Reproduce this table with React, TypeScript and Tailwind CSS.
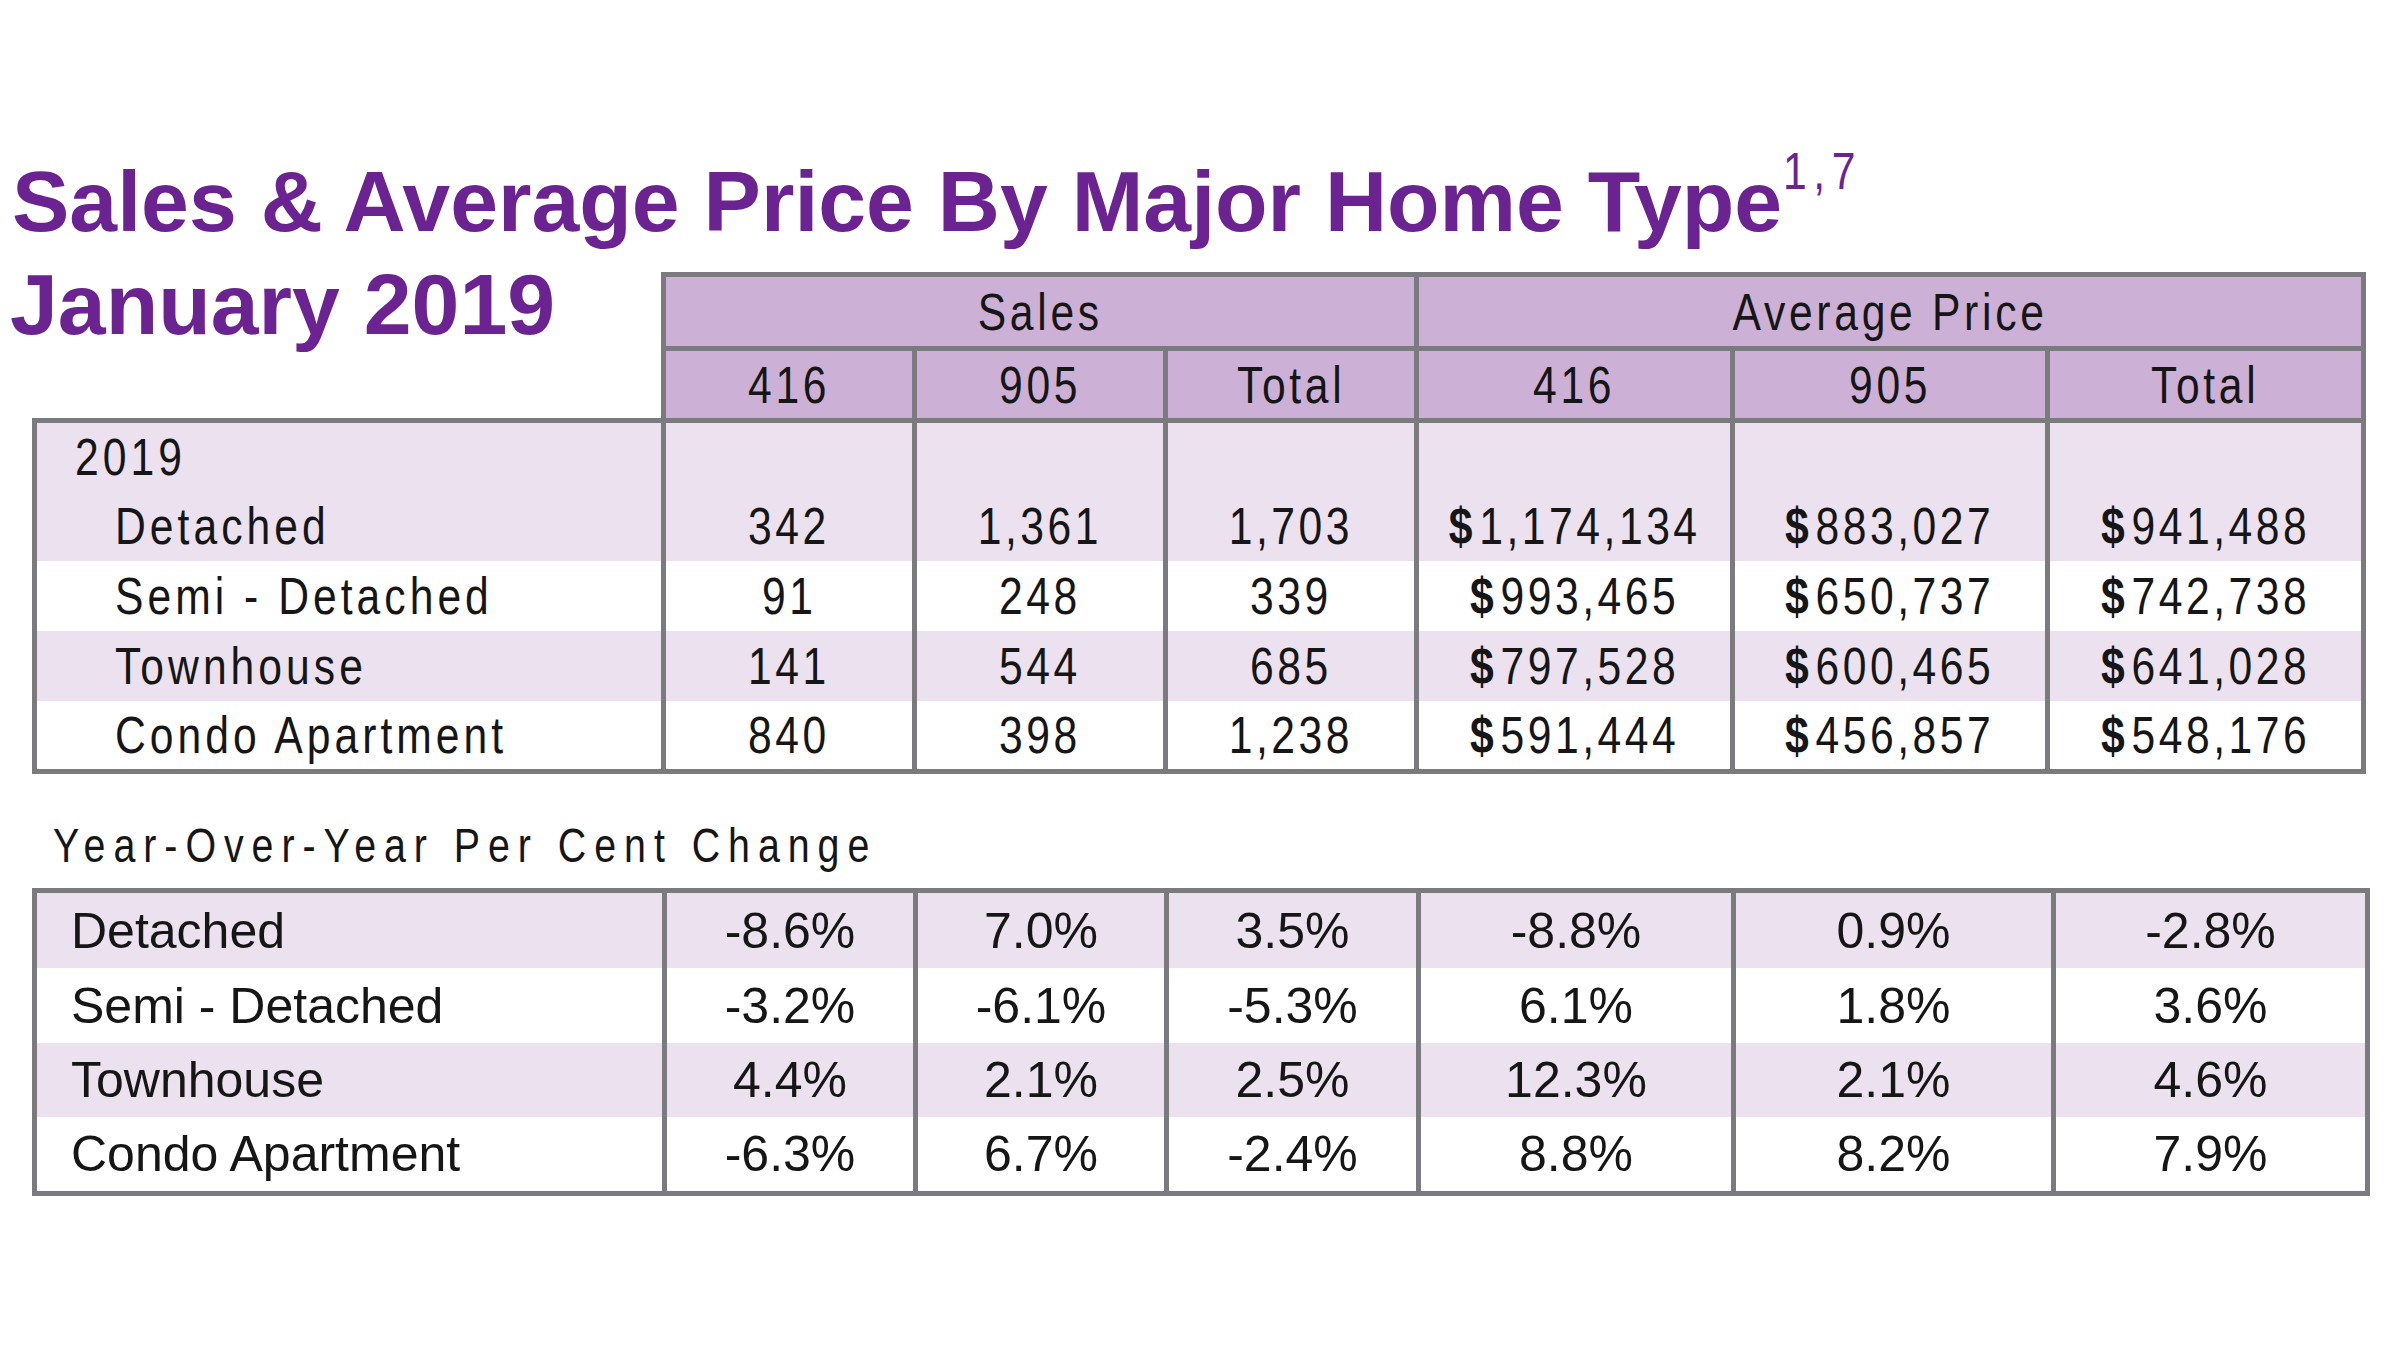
const headCols = ["416", "905", "Total", "416", "905", "Total"];

interface SalesRow {
  label: string;
  sub: boolean;
  shade: boolean;
  values: string[];
}

const salesRows: SalesRow[] = [
  { label: "2019", sub: false, shade: true, values: ["", "", "", "", "", ""] },
  {
    label: "Detached",
    sub: true,
    shade: true,
    values: ["342", "1,361", "1,703", "$1,174,134", "$883,027", "$941,488"],
  },
  {
    label: "Semi - Detached",
    sub: true,
    shade: false,
    values: ["91", "248", "339", "$993,465", "$650,737", "$742,738"],
  },
  {
    label: "Townhouse",
    sub: true,
    shade: true,
    values: ["141", "544", "685", "$797,528", "$600,465", "$641,028"],
  },
  {
    label: "Condo Apartment",
    sub: true,
    shade: false,
    values: ["840", "398", "1,238", "$591,444", "$456,857", "$548,176"],
  },
];

const changeRows = [
  { label: "Detached", shade: true, values: ["-8.6%", "7.0%", "3.5%", "-8.8%", "0.9%", "-2.8%"] },
  { label: "Semi - Detached", shade: false, values: ["-3.2%", "-6.1%", "-5.3%", "6.1%", "1.8%", "3.6%"] },
  { label: "Townhouse", shade: true, values: ["4.4%", "2.1%", "2.5%", "12.3%", "2.1%", "4.6%"] },
  { label: "Condo Apartment", shade: false, values: ["-6.3%", "6.7%", "-2.4%", "8.8%", "8.2%", "7.9%"] },
];

// condensed look: Arial-width face squeezed like Helvetica Condensed
function Narrow({ children, left }: { children: React.ReactNode; left?: boolean }) {
  return (
    <span className={`inline-block whitespace-nowrap scale-x-[0.82] ${left ? "origin-left" : "origin-center"}`}>
      {children}
    </span>
  );
}

function Money({ value }: { value: string }) {
  if (!value.startsWith("$")) return <>{value}</>;
  return (
    <>
      <span className="font-bold mr-[4px]">$</span>
      {value.slice(1)}
    </>
  );
}

export default function App() {
  return (
    <div className="w-[2400px] h-[1350px] bg-white text-[#161616] overflow-hidden pt-[159px] [font-family:'Liberation_Sans',Arial,sans-serif]">
      {/* title */}
      <div className="pl-[12px] text-[86px] leading-[85px] font-bold text-[#6b2391] whitespace-nowrap">
        Sales &amp; Average Price By Major Home Type
        <span className="relative -top-[14px] ml-[1px] align-top text-[52px] leading-none font-normal tracking-[8px]">
          <Narrow left>1,7</Narrow>
        </span>
      </div>

      {/* header row */}
      <div className="mt-[28px] flex">
        <div className="w-[661px] pl-[10px] text-[86px] leading-[64px] font-bold text-[#6b2391] whitespace-nowrap">
          January 2019
        </div>
        <div className="w-[1705px] border-[5px] border-b-0 border-[#7b7b7f] bg-[#7b7b7f] grid grid-cols-[246px_246px_246px_311px_310px_311px] grid-rows-[69px_67px] gap-[5px] text-[52px] leading-none tracking-[4.5px]">
          <div className="col-span-3 bg-[#cdb0d5] flex items-center justify-center">
            <Narrow>Sales</Narrow>
          </div>
          <div className="col-span-3 bg-[#cdb0d5] flex items-center justify-center">
            <Narrow>Average Price</Narrow>
          </div>
          {headCols.map((c, i) => (
            <div key={i} className="bg-[#cdb0d5] flex items-center justify-center">
              <Narrow>{c}</Narrow>
            </div>
          ))}
        </div>
      </div>

      {/* sales body */}
      <div className="ml-[32px] w-[2334px] border-[5px] border-[#7b7b7f] bg-[#7b7b7f] grid grid-cols-[624px_246px_246px_246px_311px_310px_311px] grid-rows-[68px_70px_70px_70px_68px] gap-x-[5px] text-[52px] tracking-[4.3px] leading-none">
        {salesRows.map((r) => (
          <div key={r.label} className="contents">
            <div
              className={`flex items-center tracking-[4.9px] ${r.sub ? "pl-[78px]" : "pl-[38px]"} ${
                r.shade ? "bg-[#ece1ef]" : "bg-white"
              }`}
            >
              <Narrow left>{r.label}</Narrow>
            </div>
            {r.values.map((v, i) => (
              <div
                key={i}
                className={`flex items-center justify-center ${r.shade ? "bg-[#ece1ef]" : "bg-white"}`}
              >
                {v && (
                  <Narrow>
                    <Money value={v} />
                  </Narrow>
                )}
              </div>
            ))}
          </div>
        ))}
      </div>

      {/* year over year */}
      <div className="mt-[48px] pl-[53px] text-[48px] leading-[48px] tracking-[9.7px]">
        <Narrow left>Year-Over-Year Per Cent Change</Narrow>
      </div>

      <div className="mt-[18px] ml-[32px] w-[2338px] border-[5px] border-[#7b7b7f] bg-[#7b7b7f] grid grid-cols-[625px_246px_246px_247px_310px_315px_309px] grid-rows-[75px_75px_74px_74px] gap-x-[5px] text-[50px] leading-none">
        {changeRows.map((r) => (
          <div key={r.label} className="contents">
            <div className={`flex items-center pl-[34px] whitespace-nowrap ${r.shade ? "bg-[#ece1ef]" : "bg-white"}`}>
              {r.label}
            </div>
            {r.values.map((v, i) => (
              <div
                key={i}
                className={`flex items-center justify-center ${r.shade ? "bg-[#ece1ef]" : "bg-white"}`}
              >
                {v}
              </div>
            ))}
          </div>
        ))}
      </div>
    </div>
  );
}
